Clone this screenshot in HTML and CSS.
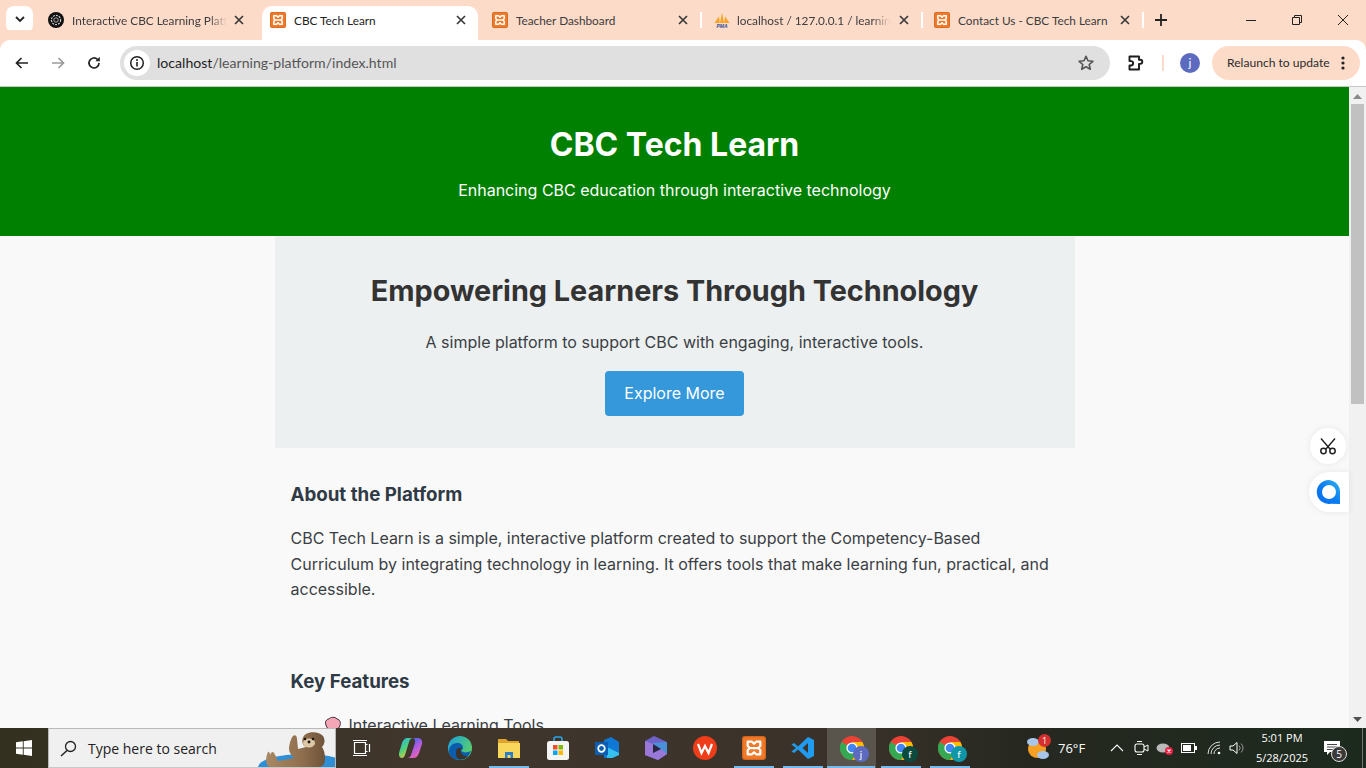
FILE: index.html
```html
<!DOCTYPE html>
<html lang="en">
<head>
<meta charset="utf-8">
<title>CBC Tech Learn</title>
<link rel="stylesheet" href="styles.css">
</head>
<body>
<svg class="defs" width="0" height="0" aria-hidden="true">
  <defs>
    <symbol id="xampp" viewBox="0 0 16 16">
      <rect width="16" height="16" rx="2" fill="#d9651c"/>
      <rect x="0.8" y="0.8" width="14.400" height="14.400" rx="1.500" fill="#ee7a2a"/>
      <path d="M3.800 3.800h2.800L8 5.200l1.400-1.400h2.800v2.900L10.800 8l1.400 1.300v2.900H9.400L8 10.800l-1.400 1.400H3.800V9.300L5.200 8 3.800 6.700zM5.200 8h5.600" fill="none" stroke="#fff" stroke-width="1.500" stroke-linejoin="round"/>
    </symbol>
    <symbol id="close" viewBox="0 0 12 12">
      <path d="M2 2l8 8M10 2l-8 8" stroke="#3a3a3a" stroke-width="1.700" fill="none"/>
    </symbol>
    <symbol id="chrome" viewBox="0 0 24 24">
      <circle cx="12" cy="12" r="12" fill="#ea4335"/>
      <path d="M12 12L1.600 6A12 12 0 0 0 12 24l5.200-9z" fill="#34a853"/>
      <path d="M12 6h10.400A12 12 0 0 1 12 24l5.200-9z" fill="#fbbc04"/>
      <circle cx="12" cy="12" r="5.600" fill="#fff"/>
      <circle cx="12" cy="12" r="4.300" fill="#4285f4"/>
    </symbol>
  </defs>
</svg>
<div class="screen">
  <div class="tabstrip">
    <button class="expander">
      <svg width="10" height="7" viewBox="0 0 10 7"><path d="M1 1l4 4 4-4" fill="none" stroke="#222" stroke-width="1.800"/></svg>
    </button>
    <div class="tab">
      <svg class="favicon" viewBox="0 0 16 16"><circle cx="8" cy="8" r="8" fill="#111"/><circle cx="8" cy="8" r="4.600" fill="none" stroke="#ccc" stroke-width="1.200" stroke-dasharray="2 1"/><circle cx="8" cy="8" r="2.200" fill="none" stroke="#aaa" stroke-width="1"/></svg>
      <span class="tab-title">Interactive CBC Learning Platform</span>
      <svg class="tab-close"><use href="#close"/></svg>
    </div>
    <div class="tab tab-active">
      <svg class="favicon"><use href="#xampp"/></svg>
      <span class="tab-title">CBC Tech Learn</span>
      <svg class="tab-close"><use href="#close"/></svg>
    </div>
    <div class="tab tab-sep">
      <svg class="favicon"><use href="#xampp"/></svg>
      <span class="tab-title">Teacher Dashboard</span>
      <svg class="tab-close"><use href="#close"/></svg>
    </div>
    <div class="tab tab-sep tab-pma">
      <svg class="favicon" viewBox="0 0 16 16"><path d="M.5 11L5 4.500l.8 6.500zM6 11L8 .5 10 11zM10.200 11l.8-6.500 4.500 6.500z" fill="#f6a323"/><text x="8" y="15.800" class="pma-text">PMA</text></svg>
      <span class="tab-title">localhost / 127.0.0.1 / learning_platform</span>
      <svg class="tab-close"><use href="#close"/></svg>
    </div>
    <div class="tab tab-sep tab-last">
      <svg class="favicon"><use href="#xampp"/></svg>
      <span class="tab-title">Contact Us - CBC Tech Learn</span>
      <svg class="tab-close"><use href="#close"/></svg>
    </div>
    <svg class="newtab" width="12" height="12" viewBox="0 0 12 12"><path d="M6 0v12M0 6h12" stroke="#222" stroke-width="1.800"/></svg>
    <div class="winctl">
      <svg width="12" height="12" viewBox="0 0 12 12"><path d="M1 6.500h10" stroke="#222"/></svg>
      <svg width="12" height="12" viewBox="0 0 12 12"><path d="M1.500 3.500h7v7h-7zM3.500 3.500v-2h7v7h-2" fill="none" stroke="#222"/></svg>
      <svg width="12" height="12" viewBox="0 0 12 12"><path d="M1 1l10 10M11 1L1 11" stroke="#222"/></svg>
    </div>
  </div>

  <div class="toolbar">
    <svg class="tool-ic" viewBox="0 0 16 16"><path d="M14 8H3M7.500 3L2.500 8l5 5" fill="none" stroke="#222" stroke-width="1.700"/></svg>
    <svg class="tool-ic" viewBox="0 0 16 16"><path d="M2 8h11M8.500 3l5 5-5 5" fill="none" stroke="#9a9a9a" stroke-width="1.700"/></svg>
    <svg class="tool-ic" viewBox="0 0 16 16"><path d="M13 8a5 5 0 1 1-1.500-3.600" fill="none" stroke="#222" stroke-width="1.700"/><path d="M13.800 1.800v4.400H9.400z" fill="#222"/></svg>
    <div class="omnibox">
      <span class="site-info">
        <svg width="16" height="16" viewBox="0 0 16 16"><circle cx="8" cy="8" r="6.300" fill="none" stroke="#222" stroke-width="1.500"/><path d="M8 7v4.500" stroke="#222" stroke-width="1.600"/><circle cx="8" cy="4.900" r="1" fill="#222"/></svg>
      </span>
      <span class="url"><span class="url-host">localhost</span>/learning-platform/index.html</span>
      <svg class="star" width="18" height="18" viewBox="0 0 18 18"><path d="M9 2.300l2 4.500 4.900.5-3.700 3.200 1.100 4.800L9 12.800l-4.300 2.500 1.100-4.800-3.700-3.200L7 6.800z" fill="none" stroke="#555" stroke-width="1.600" stroke-linejoin="round"/></svg>
    </div>
    <svg class="ext" width="18" height="18" viewBox="0 0 18 18"><path d="M2.500 2.500h9.500v3.200h1.200a2 2 0 0 1 0 4.200H12v5.600H2.500v-4h1.400a2 2 0 0 0 0-4.400H2.500z" fill="none" stroke="#1c1c1c" stroke-width="1.900" stroke-linejoin="round"/></svg>
    <span class="tool-sep"></span>
    <span class="avatar">j</span>
    <div class="relaunch">
      <span>Relaunch to update</span>
      <svg width="4" height="14" viewBox="0 0 4 14"><circle cx="2" cy="2" r="1.600" fill="#222"/><circle cx="2" cy="7" r="1.600" fill="#222"/><circle cx="2" cy="12" r="1.600" fill="#222"/></svg>
    </div>
  </div>

  <div class="viewport">
    <div class="page">
      <header class="site-header">
        <h1>CBC Tech Learn</h1>
        <p>Enhancing CBC education through interactive technology</p>
      </header>
      <main class="container">
        <section class="hero">
          <h2>Empowering Learners Through Technology</h2>
          <p>A simple platform to support CBC with engaging, interactive tools.</p>
          <a class="btn">Explore More</a>
        </section>
        <section class="about">
          <h3>About the Platform</h3>
          <p>CBC Tech Learn is a simple, interactive platform created to support the Competency-Based Curriculum by integrating technology in learning. It offers tools that make learning fun, practical, and accessible.</p>
        </section>
        <section class="features">
          <h3>Key Features</h3>
          <ul>
            <li>
              <svg class="brain" viewBox="0 0 18 18"><path d="M2 9c-1.500-3 .5-6 3-6 1-2 6-2.500 8 0 3 .5 4 4 3 6.500-.5 2.500-2.500 3.500-4 3l-1 3.500H8.500L8 12.500C5 14 2.500 12 2 9z" fill="#f4a6b6" stroke="#3a2a2a" stroke-width="1"/></svg>
              Interactive Learning Tools
            </li>
          </ul>
        </section>
      </main>
    </div>
    <div class="scrollbar">
      <svg width="9" height="5" viewBox="0 0 9 5"><path d="M0 5l4.500-5L9 5z" fill="#8a8a8a"/></svg>
      <div class="scroll-track"><div class="scroll-thumb"></div></div>
      <svg width="9" height="5" viewBox="0 0 9 5"><path d="M0 0l4.500 5L9 0z" fill="#505050"/></svg>
    </div>
    <div class="float-scissors">
      <svg width="20" height="20" viewBox="0 0 20 20"><path d="M3 2.500l9 10.500M17 2.500L8 13" stroke="#222" stroke-width="1.400" fill="none"/><circle cx="5.500" cy="15" r="2.700" fill="none" stroke="#222" stroke-width="1.500"/><circle cx="14.500" cy="15" r="2.700" fill="none" stroke="#222" stroke-width="1.500"/></svg>
    </div>
    <div class="float-q">
      <svg width="26" height="26" viewBox="0 0 26 26"><defs><linearGradient id="qg" x1="1" y1="0" x2="0" y2="1"><stop offset="0" stop-color="#35b4f4"/><stop offset=".5" stop-color="#0a7df0"/><stop offset="1" stop-color="#0a6cf0"/></linearGradient></defs><path d="M13 1a12 12 0 1 0 2 23.800l9 .2V13A12 12 0 0 0 13 1z" fill="url(#qg)"/><circle cx="13" cy="13" r="7" fill="#fff"/></svg>
    </div>
  </div>

  <div class="taskbar">
    <div class="start">
      <svg width="16" height="16" viewBox="0 0 16 16"><path d="M0 2.300l6.800-1v6.300H0zM7.700 1.200L16 0v7.600H7.700zM0 8.400h6.800v6.300l-6.800-1zM7.700 8.400H16V16l-8.300-1.200z" fill="#fff"/></svg>
    </div>
    <div class="search">
      <svg width="17" height="17" viewBox="0 0 17 17"><circle cx="10.500" cy="6.500" r="5" fill="none" stroke="#222" stroke-width="1.300"/><path d="M7 10.500L1 16" stroke="#222" stroke-width="1.500"/></svg>
      <span class="search-text">Type here to search</span>
      <svg class="otter" width="80" height="40" viewBox="0 0 80 40">
        <defs><linearGradient id="ob" x1="0" y1="0" x2="1" y2="0"><stop offset="0" stop-color="#a98963"/><stop offset=".6" stop-color="#8f6f4e"/><stop offset="1" stop-color="#6f5339"/></linearGradient></defs>
        <ellipse cx="48" cy="39" rx="46" ry="13" fill="#2f8fd6"/>
        <path d="M12 38c-3-3-2-10 0-14 1-1 2 1 2 3 1-3 3-4 4-2 2 3 3 6 4 8l16-3c-3-3-5-6-5-9 0-4 2-11 4-13 2-2 4 0 4 3l1 10 8-2c-5-2-5-10 0-13 5-3 14-2 17 2 3 5 1 9-1 11 3 4 4 13 2 17-3 4-10 5-20 5-12 1-30 2-36-3z" fill="url(#ob)"/>
        <ellipse cx="53" cy="15" rx="6" ry="4.500" fill="#dcc7a6"/>
        <circle cx="49" cy="11" r="1.300" fill="#1c140e"/><circle cx="57" cy="11" r="1.300" fill="#1c140e"/><circle cx="53" cy="14" r="1.400" fill="#1c140e"/>
      </svg>
    </div>
    <div class="apps">
      <div class="app"><svg width="20" height="20" viewBox="0 0 20 20"><path d="M2.500 4.500h11v11h-11zM13.500 6.500h2M13.500 13.500h2M17.500 6v8" fill="none" stroke="#fff" stroke-width="1.200"/><path d="M1 2.500h14M1 17.500h14" stroke="#fff" stroke-width="1"/></svg></div>
      <div class="app"><svg width="24" height="24" viewBox="0 0 24 24"><defs><linearGradient id="cpa" x1="0" y1="0" x2=".6" y2="1"><stop offset="0" stop-color="#1fb5f0"/><stop offset=".55" stop-color="#4fd17a"/><stop offset="1" stop-color="#f7c23b"/></linearGradient><linearGradient id="cpb" x1=".2" y1="0" x2=".8" y2="1"><stop offset="0" stop-color="#2a6df0"/><stop offset=".5" stop-color="#b05be0"/><stop offset="1" stop-color="#f56aa8"/></linearGradient></defs><path d="M8 2h6c-2 0-3 1-4 4l-4 13c-.5 2-2 3-3 3-2.500 0-3.500-3-3-5L3 7c1-3 3-5 5-5z" fill="url(#cpa)"/><path d="M14 2h5c3 0 5 3 4 6l-3 9c-1 3-3 5-6 5H8c2 0 3.500-1 4-3l4-12c.5-2-.5-5-2-5z" fill="url(#cpb)"/></svg></div>
      <div class="app"><svg width="24" height="24" viewBox="0 0 24 24"><defs><linearGradient id="ed" x1="0" y1="0" x2="1" y2=".6"><stop offset="0" stop-color="#1a9ee0"/><stop offset="1" stop-color="#5ad06a"/></linearGradient></defs><circle cx="12" cy="12" r="12" fill="url(#ed)"/><path d="M1 15c0-5 4-8 8-8 4 0 6 2 6 5 0 1-1 2-2 2.500 1 1.500 4 2.500 7 1.500l3-1C21 21 16 24 12 24 6 24 1 20 1 15z" fill="#0b5cad"/><path d="M8 16c0-3 2-5 5-4 1 1 0 2-.5 2.500C13 18 16 21 20 20c-3 4-8 4-11 2-1-2-1-4-1-6z" fill="#3c342c"/></svg></div>
      <div class="app app-on"><svg width="22" height="20" viewBox="0 0 22 20"><path d="M0 1h8l2 2h11v4H0z" fill="#e2a52b"/><path d="M0 5h22v15H0z" fill="#f9d65c"/><path d="M7 20v-6h8v6h-2.500v-3h-3v3z" fill="#2b7dc9"/></svg></div>
      <div class="app"><svg width="24" height="24" viewBox="0 0 24 24"><path d="M8 6V3a2 2 0 0 1 2-2h4a2 2 0 0 1 2 2v3" fill="none" stroke="#26a6e8" stroke-width="1.600"/><rect x="1" y="5" width="22" height="19" rx="2.500" fill="#f4f4f4"/><path d="M7 9h4.500v4.500H7z" fill="#f25022"/><path d="M12.500 9H17v4.500h-4.500z" fill="#7fba00"/><path d="M7 14.500h4.500V19H7z" fill="#00a4ef"/><path d="M12.500 14.500H17V19h-4.500z" fill="#ffb900"/></svg></div>
      <div class="app"><svg width="24" height="24" viewBox="0 0 24 24"><path d="M9 4l7-3 8 5v13l-7 3H9z" fill="#0f78d4"/><path d="M12 11l12 6v2l-7 3H12z" fill="#35c0f0"/><rect x="0" y="6" width="13" height="13" fill="#0a5fb4"/><circle cx="6.500" cy="12.500" r="3.300" fill="none" stroke="#fff" stroke-width="1.700"/></svg></div>
      <div class="app"><svg width="22" height="24" viewBox="0 0 22 24"><path d="M0 5l9-5 13 6v12l-9 6-13-5z" fill="#6e62c9"/><path d="M8 7l14-1v12L9 19z" fill="#4a90d8"/><path d="M0 5l8 3v9l8-4 6 5-9 6-13-5z" fill="#9a78d8"/><path d="M8 8l8 5-8 4z" fill="#2a2440"/></svg></div>
      <div class="app"><svg width="24" height="24" viewBox="0 0 24 24"><circle cx="12" cy="12" r="12" fill="#ee3d18"/><path d="M5 8l3.500 9 3.500-7 3.500 7L19 8" fill="none" stroke="#fff" stroke-width="2.200"/></svg></div>
      <div class="app app-on"><svg width="24" height="24"><use href="#xampp"/></svg></div>
      <div class="app app-on"><svg width="24" height="24" viewBox="0 0 24 24"><path d="M17 1l6 3v16l-6 3L7 13.500l-4 3.500-2.500-1.500L5 12 .5 8.500 3 7l4 3.500z" fill="#1f9cf0"/><path d="M17 7l-5.500 5 5.500 5z" fill="#3c342c"/></svg></div>
      <div class="app app-active">
        <svg width="24" height="24"><use href="#chrome"/></svg>
        <span class="profile-badge badge-j">j</span>
      </div>
      <div class="app app-on">
        <svg width="24" height="24"><use href="#chrome"/></svg>
        <span class="profile-badge badge-dark">f</span>
      </div>
      <div class="app app-on">
        <svg width="24" height="24"><use href="#chrome"/></svg>
        <span class="profile-badge badge-teal">f</span>
      </div>
    </div>
    <div class="tray">
      <div class="weather">
        <svg width="24" height="24" viewBox="0 0 24 24"><circle cx="11" cy="13" r="9" fill="#f6a021"/><ellipse cx="7" cy="6" rx="6" ry="4" fill="#a8c6ea"/><ellipse cx="17" cy="19" rx="6" ry="4" fill="#a8c6ea"/></svg>
        <span class="weather-badge">1</span>
        <span class="temp">76°F</span>
      </div>
      <svg class="chevron" width="14" height="8" viewBox="0 0 14 8"><path d="M1 7l6-6 6 6" fill="none" stroke="#fff" stroke-width="1.100"/></svg>
      <svg class="meet" width="16" height="16" viewBox="0 0 16 16"><rect x="1" y="4" width="9" height="8" rx="2" fill="none" stroke="#fff" stroke-width="1.100"/><path d="M10 7l4-2v6l-4-2" fill="none" stroke="#fff"/><path d="M3 1.500h5M3 14.500h5" stroke="#fff"/></svg>
      <span class="onedrive">
        <svg width="18" height="14" viewBox="0 0 18 14"><ellipse cx="7" cy="7" rx="6.500" ry="4.500" fill="#b9b9b9"/><circle cx="13" cy="10" r="4" fill="#e81f3e"/><path d="M11.500 8.500l3 3M14.500 8.500l-3 3" stroke="#fff" stroke-width="1.200"/></svg>
      </span>
      <svg class="battery" width="16" height="10" viewBox="0 0 16 10"><rect x=".5" y=".5" width="13" height="9" fill="none" stroke="#fff"/><rect x="2" y="2" width="8" height="6" fill="#fff"/><rect x="14" y="3" width="2" height="4" fill="#fff"/></svg>
      <svg class="wifi" width="16" height="14" viewBox="0 0 16 14"><path d="M1 13A12 12 0 0 1 13 1M4 13a9 9 0 0 1 9-9M7 13a6 6 0 0 1 6-6" fill="none" stroke="#ddd" stroke-width="1"/><circle cx="12" cy="12" r="1.300" fill="#fff"/></svg>
      <svg class="volume" width="16" height="14" viewBox="0 0 16 14"><path d="M1 5h3l4-3.500v11L4 9H1z" fill="none" stroke="#fff"/><path d="M10 4.500a3.500 3.500 0 0 1 0 5M12 2.500a6 6 0 0 1 0 9" fill="none" stroke="#999"/></svg>
      <div class="clock"><span>5:01 PM</span><span>5/28/2025</span></div>
      <div class="notify">
        <svg width="16" height="15" viewBox="0 0 16 15"><path d="M0 0h16v11H6l-3 3v-3H0z" fill="#fff"/><path d="M3 3.500h10M3 6h10M3 8.500h6" stroke="#444"/></svg>
        <span class="notify-badge">5</span>
      </div>
      <span class="show-desktop"></span>
    </div>
  </div>
</div>
</body>
</html>
```
FILE: styles.css
```css
* { box-sizing: border-box; }
html, body { margin: 0; height: 100%; overflow: hidden; }
.defs { position: absolute; }
.pma-text { font: italic bold 5px "Liberation Sans", sans-serif; fill: #2f4d92; text-anchor: middle; }
.screen {
  width: 1366px; height: 768px; display: flex; flex-direction: column;
  font-family: Lato, "Open Sans", sans-serif; overflow: hidden; background: #fff;
}

/* tab strip */
.tabstrip { height: 40px; background: #fddbc9; display: flex; align-items: flex-end; flex: none; }
.expander {
  width: 27px; height: 27px; margin: 0 7px 7px 6px; border: 0; border-radius: 8px; background: #fff;
  display: flex; align-items: center; justify-content: center; padding: 0;
}
.tab {
  width: 216px; height: 34px; margin-right: 6px; padding: 0 8px 6px; display: flex; align-items: center;
  position: relative; font-size: 11.800px; color: #3c3c3c; flex: none;
}
.tab-active { background: #fff; border-radius: 10px 10px 0 0; color: #222; }
.tab-sep::after {
  content: ""; position: absolute; right: -2px; top: 6px; width: 2px; height: 16px; background: #fff;
}
.tab-pma { width: 214px; }
.tab-pma .tab-title { margin-left: 7px; }
.tab-pma .tab-close { margin-right: 2px; margin-left: 8px; }
.tab-pma::after { right: -3px; }
.favicon { width: 16px; height: 16px; flex: none; }
.tab-title {
  margin-left: 8px; flex: 1; white-space: nowrap; overflow: hidden; min-width: 0;
  -webkit-mask-image: linear-gradient(to left, transparent 0, #000 18px);
  mask-image: linear-gradient(to left, transparent 0, #000 18px);
}
.tab-active .tab-title, .tab-last .tab-title, .tab-sep:not(.tab-pma) .tab-title { -webkit-mask-image: none; mask-image: none; }
.tab-close { width: 12px; height: 12px; flex: none; margin-left: 6px; margin-right: 3px; }
.newtab { margin: 0 0 14px 7px; flex: none; }
.winctl { margin-left: auto; display: flex; gap: 34px; padding: 0 17px 14px 0; }

/* toolbar */
.toolbar {
  height: 47px; flex: none; background: #fff; display: flex; align-items: center;
  padding: 0 6px 1px 14px; border-bottom: 1px solid #c8c8c8; border-radius: 10px 10px 0 0;
  margin-top: 0; box-shadow: 0 -10px 0 #fddbc9;
}
.tool-ic { width: 16px; height: 16px; margin-right: 20px; flex: none; }
.omnibox {
  width: 990px; height: 34px; margin-left: -2px; background: #e0e0e0; border-radius: 17px;
  display: flex; align-items: center; padding: 0 15px 0 4px; flex: none;
}
.site-info {
  width: 26px; height: 26px; border-radius: 50%; background: #fff;
  display: flex; align-items: center; justify-content: center; flex: none;
}
.url { margin-left: 7px; font-size: 14.100px; color: #555; flex: 1; white-space: nowrap; }
.url-host { color: #1f1f1f; }
.ext { margin-left: 17px; flex: none; }
.tool-sep { width: 2px; height: 16px; background: #fddbc9; margin-left: 17px; flex: none; }
.avatar {
  width: 20px; height: 20px; border-radius: 50%; background: #5c6bc0; color: #fff; margin-left: 16px;
  display: flex; align-items: center; justify-content: center; font-size: 12px; flex: none;
}
.relaunch {
  width: 148px; height: 34px; margin-left: 12px; background: #fddbc9; border-radius: 17px; flex: none;
  display: flex; align-items: center; justify-content: space-between; padding: 0 15px;
  font-size: 12.100px; color: #2a2a2a; white-space: nowrap;
}

/* page */
.viewport { flex: 1; min-height: 0; display: flex; position: relative; overflow: hidden; background: #f9f9f9; }
.page { flex: 1; min-width: 0; overflow: hidden; font-family: Inter, sans-serif; color: #3b3f44; }
.site-header { background: #008000; color: #fff; text-align: center; padding: 37px 16px 32px; height: 149px; }
.site-header h1 { margin: 0; font-size: 32px; line-height: 42px; font-weight: 700; }
.site-header p { margin: 11px 0 0; font-size: 16px; line-height: 26px; }
.container { width: 800px; margin: 0 auto; }
.hero { background: #ecf0f1; height: 212px; padding: 36px 16px 0; text-align: center; }
.hero h2 { margin: 0; font-size: 28.800px; line-height: 38px; font-weight: 700; color: #333; }
.hero p { margin: 19px 0 0; font-size: 16px; line-height: 26px; }
.btn {
  display: inline-block; margin-top: 16px; padding: 0 19px; height: 45px; line-height: 45px; background: #3498db;
  color: #fff; border-radius: 4px; font-size: 16px; font-weight: 400;
}
.about { padding: 34px 16px 0; }
.about h3, .features h3 { margin: 0; font-size: 18.720px; line-height: 26px; font-weight: 700; color: #2f3a45; }
.about p { margin: 18px 0 0; font-size: 16px; line-height: 25.600px; }
.features { padding: 66px 16px 0; }
.features ul { list-style: none; margin: 17px 0 0; padding: 0 0 0 33px; }
.features li { font-size: 16px; line-height: 26px; display: flex; align-items: center; gap: 7px; }
.brain { width: 18px; height: 18px; flex: none; }

/* scrollbar */
.scrollbar { width: 17px; flex: none; background: #f1f1f1; display: flex; flex-direction: column; align-items: center; padding: 7px 0 6px; gap: 0; }
.scroll-track { flex: 1; width: 100%; padding: 5px 2px 0; }
.scroll-thumb { height: 300px; background: #c1c1c1; }

/* floating widgets */
.float-scissors {
  position: absolute; left: 1310px; top: 341px; width: 36px; height: 36px; border-radius: 50%; background: #fff;
  display: flex; align-items: center; justify-content: center; box-shadow: 0 0 6px rgba(0,0,0,.08);
}
.float-q {
  position: absolute; left: 1309px; top: 385px; width: 40px; height: 40px; border-radius: 20px 0 0 20px; background: #fff;
  display: flex; align-items: center; justify-content: center; box-shadow: 0 0 6px rgba(0,0,0,.08);
}

/* taskbar */
.taskbar {
  height: 40px; flex: none; display: flex; align-items: stretch; color: #fff;
  background: linear-gradient(to right, #33301f 0, #40362c 30%, #3a322a 62%, #262820 75%, #1c2a1e 100%);
}
.start { width: 48px; display: flex; align-items: center; justify-content: center; flex: none; }
.search {
  width: 288px; flex: none; background: #f0f0f0; border: 1px solid #b8b8b8; border-bottom-color: #c8c8c8;
  display: flex; align-items: center; padding-left: 11px; position: relative; overflow: hidden; color: #222;
}
.search-text { margin-left: 11px; font-size: 14px; font-family: "Open Sans", sans-serif; }
.otter { position: absolute; right: -1px; top: -1px; }
.apps { display: flex; flex: none; padding-left: 1px; }
.app { width: 49px; display: flex; align-items: center; justify-content: center; position: relative; flex: none; }
.app-on::after, .app-active::after {
  content: ""; position: absolute; left: 5px; right: 4px; bottom: 0; height: 2px; background: #76b9ed;
}
.app-active { background: #5a554c; }
.app-active::after { left: 0; right: 1px; }
.profile-badge {
  position: absolute; left: 26px; top: 18px; width: 16px; height: 16px; border-radius: 50%; color: #fff;
  font-size: 10px; line-height: 16px; text-align: center;
}
.badge-j { background: #5c6bc0; }
.badge-dark { background: #0b4a3e; }
.badge-teal { background: #0f97a8; }
.tray { flex: 1; display: flex; align-items: center; position: relative; font-family: "Open Sans", sans-serif; padding-left: 52px; min-width: 0; }
.weather { display: flex; align-items: center; position: relative; flex: none; width: 60px; }
.weather-badge {
  position: absolute; left: 12px; top: -2px; width: 13px; height: 13px; border-radius: 50%; background: #d32f2f;
  font-size: 9px; line-height: 13px; text-align: center;
}
.temp { margin-left: 8px; font-size: 13px; white-space: nowrap; }
.chevron { margin-left: 24px; flex: none; }
.meet { margin-left: 10px; flex: none; }
.onedrive { margin-left: 6px; display: flex; flex: none; }
.battery { margin-left: 7px; flex: none; }
.wifi { margin-left: 10px; flex: none; }
.volume { margin-left: 6px; flex: none; }
.clock {
  margin-left: 0; width: 74px; display: flex; flex-direction: column; align-items: center; flex: none;
  font-size: 11px; line-height: 20px; white-space: nowrap;
}
.notify { margin-left: 1px; width: 30px; height: 30px; position: relative; flex: none; padding: 6px 0 0 4px; }
.notify-badge {
  position: absolute; left: 11px; top: 13px; width: 16px; height: 16px; border-radius: 50%; background: #3a3a3a;
  border: 1px solid #ddd; font-size: 10px; line-height: 14px; text-align: center;
}
.show-desktop { position: absolute; right: 3px; top: 0; bottom: 0; width: 1px; background: #777; }
```
